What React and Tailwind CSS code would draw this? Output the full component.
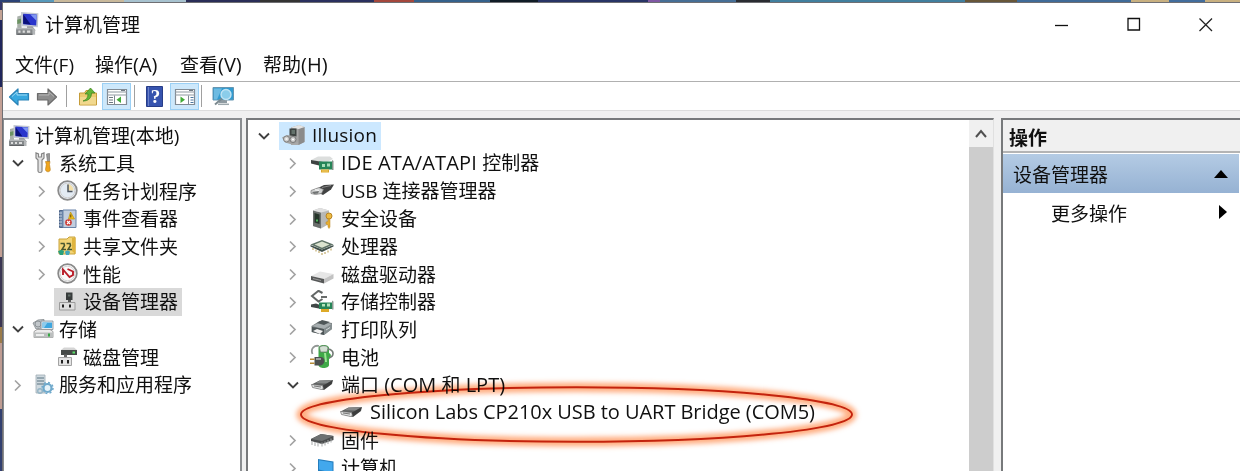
import React from "react";

const Svg = ({ children, w = 24, h = 24, className = "" }) => (
  <svg width={w} height={h} viewBox={`0 0 ${w} ${h}`} className={`block shrink-0 ${className}`} fill="none">
    {children}
  </svg>
);

const ComputerIcon = ({ size = 24 }) => (
  <svg width={size} height={size} viewBox="0 0 24 24" className="block shrink-0" fill="none">
    <path d="M3 5l4-1v12H3z" fill="#a9b0aa" />
    <path d="M3 8l4-1v4l-4 1z" fill="#6b9362" />
    <path d="M6.500 1l16 1-.5 13-15.500-1z" fill="#c3c8d2" />
    <path d="M8.500 2.500l12.500.8-.5 10-12-1z" fill="#2a35cc" />
    <path d="M8.500 3l7 9.500-7-.7z" fill="#0b1178" />
    <path d="M15 3.200l6 .3-.3 5.500z" fill="#7f97f2" />
    <path d="M12 14h5l3 4h-8z" fill="#9b9da0" />
    <path d="M2 15.500h15l2.500 1.500v5H2z" fill="#b3b6b8" />
    <path d="M2 17h15v5H2z" fill="#85898b" />
    <path d="M4 18h2v2H4zM8 18h2v2H8zM12 18h3v2h-3z" fill="#ddd" />
    <path d="M3 21.500h14" stroke="#606265" />
  </svg>
);
const ToolsIcon = () => (
  <Svg>
    <path d="M4 2v5l2 2v11c0 2 4 2 4 0V9l2-2V2L9.500 3v3h-3V3z" fill="#e2e2e2" stroke="#858585" strokeWidth="1.200" />
    <path d="M14.500 3l3-.5v8h-2z" fill="#999" stroke="#777" strokeWidth=".7" />
    <path d="M13.500 10.500h4.500l-.5 3 .8 5c0 3-4.500 3-4.800 0l.8-5z" fill="#f0a51c" stroke="#b97a12" strokeWidth=".6" />
  </Svg>
);
const ClockIcon = () => (
  <Svg>
    <circle cx="11.500" cy="11.500" r="9.300" fill="#e8edf3" stroke="#8b8b8b" strokeWidth="1.800" />
    <circle cx="11.500" cy="11.500" r="7.300" fill="#e3ebf3" stroke="#cfcfcf" />
    <path d="M11.500 11.500V5a6.500 6.500 0 0 1 6 6.500z" fill="#f3dfa8" />
    <path d="M12 5.500v7h4.500" stroke="#4c5561" strokeWidth="1.500" />
  </Svg>
);
const EventIcon = () => (
  <Svg>
    <path d="M3.500 3.500h4v17h-4z" fill="#6d86aa" stroke="#4b6388" />
    <path d="M7 3h13v17.500H7z" fill="#c2cede" stroke="#6883a8" />
    <path d="M3 6h3M3 9h3M3 12h3M3 15h3M3 18h3" stroke="#c3d0df" />
    <path d="M14.500 5l4 7h-6z" fill="#f5c21b" stroke="#b78f13" strokeWidth=".7" />
    <path d="M14.800 7.500v3" stroke="#5b4300" />
    <circle cx="12.500" cy="15.500" r="3.300" fill="#cc3832" />
    <path d="M11 14l3 3m0-3l-3 3" stroke="#fff" strokeWidth="1.100" />
  </Svg>
);
const ShareIcon = () => (
  <Svg>
    <path d="M3 5h8l2-2h6v17H3z" fill="#f2d476" stroke="#c9a33c" />
    <path d="M16 4h3.500v16L16 17z" fill="#dfb43f" />
    <path d="M4.500 9.500h3.500l.5 2-2.500 4h4M10.500 9.500h3.500l.5 2-2.500 4h4" stroke="#48562f" strokeWidth="1.500" />
    <path d="M2 17.500c2-2 5-2 6 0l-1 3.500H4z" fill="#2aa07c" />
    <path d="M9 18c1-2 4-2 5 0l-1 3h-3z" fill="#41a7bd" />
  </Svg>
);
const PerfIcon = () => (
  <Svg>
    <circle cx="11.500" cy="11.500" r="9.300" fill="#fafafa" stroke="#898989" strokeWidth="1.800" />
    <circle cx="11.500" cy="11.500" r="7.300" stroke="#d5d5d5" />
    <path d="M7 13V7.500l6.500 7.500 3.500-2V9.500L11.500 7" stroke="#b91d28" strokeWidth="1.900" />
  </Svg>
);
const DeviceIcon = () => (
  <Svg>
    <path d="M10 2.500h6.500V10H10z" fill="#383c3c" />
    <path d="M12 4.500h2.500v2H12z" fill="#62706a" />
    <path d="M12 10h3v3h-3z" fill="#555" />
    <path d="M3.500 12.500h15.500v7.500H3.500z" fill="#dedede" stroke="#9b9b9b" />
    <path d="M6 14.500h2v3H6zM13 14.500h2v3h-2z" fill="#222" />
  </Svg>
);
const StorageIcon = () => (
  <Svg>
    <path d="M1 6l5-3 6-.5v8L4 12z" fill="#c2c7cb" stroke="#82888c" strokeWidth=".8" />
    <circle cx="6" cy="7" r="3" stroke="#8c9296" />
    <path d="M9 4h12v8.500H9z" fill="#e4e9ed" stroke="#7e8b94" strokeWidth=".8" />
    <path d="M10.500 5.500H20V11h-9.500z" fill="#3ea6df" />
    <path d="M10.500 5.500h5L12 11h-1.500z" fill="#8ecbeb" />
    <path d="M2 14.500l3-2h13l3 2v6H2z" fill="#ececec" stroke="#909090" strokeWidth=".8" />
    <path d="M2 15.500h19v5H2z" fill="#bcbfbf" />
    <path d="M4 18h8" stroke="#fff" strokeWidth="1.500" />
    <path d="M16 16.500h2v3h-2z" fill="#35a843" />
  </Svg>
);
const DiskMgmtIcon = () => (
  <Svg>
    <path d="M5 5l3-2.500h10L21 5z" fill="#d5d5d5" />
    <path d="M5 5h16v5H5z" fill="#454947" />
    <path d="M16.500 6.500h2.500v2h-2.500z" fill="#59e169" />
    <path d="M8 9.500h3v3H8z" fill="#666" />
    <path d="M2.500 12.500h13v8h-13z" fill="#e4e4e4" stroke="#a3a3a3" />
    <path d="M5 15h2v3.500H5zM11 15h2v3.500h-2z" fill="#222" />
  </Svg>
);
const ServicesIcon = () => (
  <Svg>
    <path d="M4 2h9v18H4z" fill="#cfd9df" stroke="#9eacb4" strokeWidth=".8" />
    <path d="M5 5h7M5 8h7M5 11h7" stroke="#5b7482" strokeWidth="1.200" />
    <circle cx="15.500" cy="15" r="4" stroke="#6fa9cb" strokeWidth="2.200" fill="#e6f3fa" />
    <circle cx="15.500" cy="15" r="5.500" stroke="#6fa9cb" strokeWidth="1.500" strokeDasharray="2 2.300" />
    <circle cx="8" cy="18" r="2.300" stroke="#95b5c6" strokeWidth="1.400" />
  </Svg>
);

const HostIcon = () => (
  <Svg>
    <path d="M9 3.500l8-2.500L22.500 3v15l-6 3H9z" fill="#a9a9a9" />
    <path d="M16.500 5l6-2v15l-6 3z" fill="#8b8b8b" />
    <path d="M9 3.500l8-2.500L22.500 3l-6 2z" fill="#e4e4e4" />
    <path d="M7.500 4.500h7v9h-7z" fill="#3d4341" />
    <path d="M9.500 6H13v4H9.500z" fill="#64726c" />
    <path d="M0 13.500l5-2.500 10 1.500 1 5.500-6 2.500-7-2z" fill="#a3a3a3" />
    <circle cx="4.500" cy="15" r="3" fill="#cfcfcf" stroke="#808080" />
    <circle cx="11" cy="15.500" r="3" fill="#cacaca" stroke="#777" />
    <path d="M3.500 15h2M10 15.500h2" stroke="#fff" strokeWidth="1.500" />
  </Svg>
);
const IdeIcon = () => (
  <Svg>
    <path d="M1 9l7-3.500h12L23 8l-8 4z" fill="#dcdedd" />
    <path d="M1 9l12 2v4.500L1 12.500z" fill="#3e4342" />
    <path d="M9 10.500h13.500v8H9z" fill="#268558" />
    <path d="M12 13h3v3h-3zM17 12.500h3v3h-3z" fill="#a7ddb8" />
    <path d="M22 9l1.500 1v9H22z" fill="#87938b" />
    <path d="M11 18.500h8v3h-8z" fill="#dba72b" />
    <path d="M13 18.500v3m2-3v3m2-3v3" stroke="#ffe588" strokeWidth=".7" />
  </Svg>
);
const UsbIcon = () => (
  <Svg>
    <path d="M9 8.500l5-2.500 10-.5-3 5-8 5.500-4-2z" fill="#414242" />
    <path d="M12 8.500l9-2" stroke="#888" />
    <path d="M1 11.500l8-3 4.500 2-2 4-6 1-4.500-1z" fill="#cfd1d1" stroke="#777" strokeWidth=".7" />
    <path d="M2 13l7-1-1 2.500-4 .5z" fill="#707373" />
    <path d="M5 10.800l4 .5" stroke="#fff" />
  </Svg>
);
const SecurityIcon = () => (
  <Svg>
    <path d="M3 3.500l7-2.500 9 2.500V17l-8 4.500-8-2.500z" fill="#b7b8b7" />
    <path d="M3 3.500l8 2v16L3 19z" fill="#6b6f6d" />
    <path d="M3 3.500l7-2.500 9 2.500-8 2z" fill="#e0e0e0" />
    <path d="M4.500 6l5 1.500V17l-5-1.500z" fill="#26352a" />
    <path d="M7 12.500v2" stroke="#50c55f" strokeWidth="1.800" />
    <circle cx="19" cy="9" r="3" fill="#edbb42" stroke="#b88424" />
    <path d="M18 12h2v8l-1 1.500-1-1.500v-2l-2-1v-2l2-.5z" fill="#e7ae31" stroke="#b88424" strokeWidth=".5" />
  </Svg>
);
const CpuIcon = () => (
  <Svg>
    <path d="M.5 11l11.500 4.500L23.500 11v1.500L12 18 .5 12.500z" fill="#40504b" />
    <path d="M.5 10.500L12 6l11.500 4.500L12 15.500z" fill="#5f7367" />
    <path d="M4.500 10.400L12 7.500l7.500 2.900L12 13.800z" fill="#dbe3cf" />
    <path d="M3 14v2m3-.5v2m3-.5v2m3 0v2m3-3v2m3-3.500v2m3-4v2" stroke="#b59a4e" />
  </Svg>
);
const DiskIcon = () => (
  <Svg>
    <path d="M1 14l9-4.500 13.500 2.500-9.500 5z" fill="#e6e6e6" />
    <path d="M1 14l13 3v4.500L1 18z" fill="#565858" />
    <path d="M14 17l9.500-5v4.500L14 21.500z" fill="#c2c2c2" />
    <path d="M3 16.500l8 2" stroke="#999" />
  </Svg>
);
const StorageControllerIcon = () => (
  <Svg>
    <path d="M12.500 3L8.500.8 2 6l6.500 5.500 4-2.500" stroke="#626665" strokeWidth="2" />
    <path d="M11 7h6" stroke="#4e5251" strokeWidth="1.700" />
    <path d="M1 14.500l5-1 8 3v3L1 17z" fill="#404746" />
    <path d="M9 12.500h14V19H9z" fill="#268558" />
    <path d="M12 14h3v2.500h-3zM17 13.500h3v3h-3z" fill="#b3e4ba" />
    <path d="M22 10.500l1.500 1v8H22z" fill="#909b94" />
    <path d="M11 19h8v3h-8z" fill="#ddaa28" />
  </Svg>
);
const PrinterIcon = () => (
  <Svg>
    <path d="M1.500 9l8-5 12.500 2v6l-8 6-12.500-3z" fill="#7c8384" />
    <path d="M2 9l9-4 11 2-8 5z" fill="#a7aeb0" />
    <path d="M7 6l5-3 8 2-6 3z" fill="#4f5759" />
    <path d="M2 10l12 2v6L2 15z" fill="#4e5658" />
    <path d="M3 14l4-2 6 2-3 3z" fill="#f2f2f2" />
    <path d="M14 12l8-5v5l-8 6z" fill="#858e90" />
    <path d="M16 13l4-2.500" stroke="#d3d9da" />
  </Svg>
);
const BatteryIcon = () => (
  <Svg w={24} h={26} className="-my-px">
    <path d="M2.500 10C0 4 5 1 9 2" stroke="#919694" strokeWidth="1.800" />
    <path d="M8.500 4c0-4 10.500-4 10.500 0v5c2.500 1 2.500 4 0 6v6c0 4-10.500 4-10.500 0z" fill="#3fa948" />
    <path d="M9.500 4c0-3 8.500-3 8.500 0l-1 4h-6.500z" fill="#d2dfd3" stroke="#67756a" strokeWidth=".7" />
    <path d="M15 9l1 9" stroke="#9be894" strokeWidth="2" />
    <path d="M18 5c6.500 1 6.500 7 1 9" stroke="#737b76" strokeWidth="1.600" />
    <path d="M4.500 13h7c4.500 1 3.500 8-1 8.500h-6z" fill="#4c5050" />
    <path d="M6 15h5" stroke="#b8bdb9" strokeWidth="1.500" />
    <path d="M0 14.500h4.500V16H0zM0 18.500h4.500V20H0z" fill="#b58a36" />
  </Svg>
);
const PortIcon = () => (
  <Svg>
    <path d="M1.500 11.500l8-4 13.500-.5-1 4-8 6-11-2.500z" fill="#5c5e5e" />
    <path d="M9.500 7.800l13-.8-6 3.500-11-.3z" fill="#858888" />
    <path d="M1.500 11.500l11 1 1 3-2 1-9-2z" fill="#dfe1e1" stroke="#777" strokeWidth=".7" />
    <path d="M13 12.500l9.500-5-1 3.500-7.500 5.500z" fill="#3c3d3d" />
    <path d="M4 13l7 1" stroke="#777" strokeWidth="1.200" />
  </Svg>
);
const FirmwareIcon = () => (
  <Svg>
    <path d="M1 11l10-5 12.500 2v4L12 16 1 13z" fill="#4a4c4d" />
    <path d="M1 11l10-5 12.500 2L12 13z" fill="#6d7071" />
    <path d="M2 13v4m3-3v4m3-3.500v4m4-4v4m3-5v4m3-5.500v4m3-5.500v4" stroke="#a5a8a9" />
  </Svg>
);
const MonitorIcon = () => (
  <Svg>
    <path d="M8 3l15.500 2.500V19L8 15z" fill="#247dbd" />
    <path d="M9 4.200l13.500 2.300v10.500L9 13.500z" fill="#42a8ed" />
    <path d="M14 17v4m-4 0h9" stroke="#777" strokeWidth="2" />
  </Svg>
);

const ArrowIcon = ({ flip, fill, dark, light }) => (
  <Svg w={22} h={20} className={flip ? "-scale-x-100" : ""}>
    <path d="M1.500 11l8.500-8v4.500h10.500v6.500H10V19z" fill={fill} stroke={dark} strokeWidth="1.200" strokeLinejoin="round" />
    <path d="M4 10.500l5-4.500v3h10" stroke={light} strokeWidth="1" />
  </Svg>
);
const UpFolderIcon = () => (
  <Svg w={20} h={20}>
    <path d="M1.500 7h5l1.500-2.500h5L14 7h4.500v12h-17z" fill="#eccb70" stroke="#c59c39" />
    <path d="M2 11h16v7.500H2z" fill="#f1d88e" />
    <path d="M5 15c3-1 5-3 5-7H7l5.500-6L17 7h-3.500c0 5-3 8-8.500 8z" fill="#62b336" stroke="#39831b" strokeWidth=".7" />
  </Svg>
);
const PaneIcon = ({ right }) => (
  <Svg w={22} h={20}>
    <path d="M1.500 3.500h19v15h-19z" fill="#fff" stroke="#828b94" strokeWidth="1.200" />
    <path d="M1 6h20M1 9h20" stroke="#8f99a2" strokeWidth="1.200" />
    <path d="M15 4.500h4" stroke="#727b84" />
    {right ? (
      <>
        <path d="M14.500 9.500v9" stroke="#7f8992" />
        <path d="M16.500 11.500h3M16.500 14h3M16.500 16.500h3" stroke="#4b77a0" />
        <path d="M6.500 10.500v6.500l4.500-3.250z" fill="#42ac37" />
      </>
    ) : (
      <>
        <path d="M8.500 9.500v9" stroke="#7f8992" />
        <path d="M3 11.500h4M3 14h4M3 16.500h4" stroke="#6b7680" />
        <path d="M15 10.500v6.500l-4.500-3.250z" fill="#42ac37" />
      </>
    )}
  </Svg>
);
const HelpIcon = () => (
  <Svg w={18} h={21}>
    <path d="M.5.500h16v20H.5z" fill="#3653ae" stroke="#273d88" />
    <path d="M2.500 1v19" stroke="#6b81c8" />
    <text x="9.500" y="17" textAnchor="middle" fontSize="19" fontWeight="700" fill="#fff" className="font-['Liberation_Serif',serif]">?</text>
  </Svg>
);
const ConsoleIcon = () => (
  <Svg w={23} h={20}>
    <path d="M1 1.500h20.500v12.500H1z" fill="#329bd0" stroke="#6796b1" />
    <path d="M2 2.500h8l-5 11H2z" fill="#6dbbe2" />
    <path d="M7 14h8v3H7z" fill="#8e9aa1" />
    <circle cx="14" cy="8.500" r="5" fill="#8bcdea" stroke="#c1e4f4" strokeWidth="1.400" />
    <path d="M10 12.500l-7 6" stroke="#7b898f" strokeWidth="2" />
    <path d="M6 18.300h11" stroke="#9da8ad" strokeWidth="1.500" />
  </Svg>
);

const Chevron = ({ open, className = "" }) => (
  <svg width="14" height="14" viewBox="0 0 14 14" fill="none" className={`block shrink-0 ${className}`}>
    {open ? (
      <path d="M2 4.500L7 9.500l5-5" stroke="#404040" strokeWidth="1.900" />
    ) : (
      <path d="M4 2.500L9 7.500l-5 5" stroke="#a3a3a3" strokeWidth="1.700" />
    )}
  </svg>
);

const L = ({ children, className = "" }) => (
  <span className={`font-['Open_Sans',sans-serif] ${className}`}>{children}</span>
);

const NAV = [
  { pad: "pl-[3px]", icon: <ComputerIcon />, label: <>计算机管理<L>(</L>本地<L>)</L></>, root: true },
  { pad: "pl-[7px]", open: true, icon: <ToolsIcon />, label: "系统工具" },
  { pad: "pl-[31px]", icon: <ClockIcon />, label: "任务计划程序" },
  { pad: "pl-[31px]", icon: <EventIcon />, label: "事件查看器" },
  { pad: "pl-[31px]", icon: <ShareIcon />, label: "共享文件夹" },
  { pad: "pl-[31px]", icon: <PerfIcon />, label: "性能" },
  { pad: "pl-[31px]", icon: <DeviceIcon />, label: "设备管理器", leaf: true, selected: true },
  { pad: "pl-[7px]", open: true, icon: <StorageIcon />, label: "存储" },
  { pad: "pl-[31px]", icon: <DiskMgmtIcon />, label: "磁盘管理", leaf: true },
  { pad: "pl-[7px]", icon: <ServicesIcon />, label: "服务和应用程序" },
];

const DEVICES = [
  { icon: <IdeIcon />, label: <><L className="text-[20px] tracking-[0.15px]">IDE ATA/ATAPI </L>控制器</> },
  { icon: <UsbIcon />, label: <><L>USB </L>连接器管理器</> },
  { icon: <SecurityIcon />, label: "安全设备" },
  { icon: <CpuIcon />, label: "处理器" },
  { icon: <DiskIcon />, label: "磁盘驱动器" },
  { icon: <StorageControllerIcon />, label: "存储控制器" },
  { icon: <PrinterIcon />, label: "打印队列" },
  { icon: <BatteryIcon />, label: "电池" },
  { icon: <PortIcon />, label: <>端口<L className="text-[20px]"> (COM </L>和<L className="text-[20px]"> LPT)</L></>, open: true },
  { icon: <PortIcon />, label: <L className="text-[20px] tracking-[-0.05px]">Silicon Labs CP210x USB to UART Bridge (COM5)</L>, child: true },
  { icon: <FirmwareIcon />, label: "固件" },
  { icon: <MonitorIcon />, label: "计算机" },
];

function NavRow({ item }) {
  return (
    <div className={`flex h-[27.670px] shrink-0 items-center whitespace-nowrap ${item.pad}`}>
      {!item.root && (item.leaf ? <span className="w-[14px] shrink-0" /> : <Chevron open={item.open} />)}
      <div
        className={`flex h-full items-center pr-1 ${item.root ? "gap-1" : item.leaf ? "ml-[5px] gap-[3px] pl-[2px]" : "ml-[7px] gap-[3px]"} ${item.selected ? "bg-[#d9d9d9]" : ""}`}
      >
        {item.icon}
        <span className={item.root ? "" : "mb-[2px]"}>{item.label}</span>
      </div>
    </div>
  );
}

function DeviceRow({ item }) {
  return (
    <div className={`flex h-[27.670px] shrink-0 items-center whitespace-nowrap ${item.child ? "pl-[91px]" : "pl-[38px]"}`}>
      {!item.child && <Chevron open={item.open} className="mr-[10px]" />}
      {item.icon}
      <span className="mb-[2px] ml-[7px]">{item.label}</span>
    </div>
  );
}

export default function App() {
  return (
    <div className="flex h-[471px] w-[1240px] flex-col overflow-hidden bg-white font-['Noto_Sans_CJK_SC',sans-serif] text-[19px] leading-[27px] text-[#101010]">
      <div className="flex h-[2px] shrink-0">
        <div className="w-[20px] bg-[#2b4276]" />
        <div className="w-[34px] bg-[#5799bb]" />
        <div className="w-[70px] bg-[#c9b99b]" />
        <div className="w-[62px] bg-[#a7c2cf]" />
        <div className="w-[74px] bg-[#292d57]" />
        <div className="w-[40px] bg-[#333]" />
        <div className="w-[74px] bg-[#2a305e]" />
        <div className="w-[40px] bg-[#a4473c]" />
        <div className="w-[76px] bg-[#35618b]" />
        <div className="w-[48px] bg-[#101c26]" />
        <div className="w-[110px] bg-[#283465]" />
        <div className="w-[12px] bg-[#7f58a3]" />
        <div className="w-[76px] bg-[#466e95]" />
        <div className="w-[34px] bg-[#2a2c31]" />
        <div className="w-[195px] bg-[#417f9e]" />
        <div className="w-[52px] bg-[#675638]" />
        <div className="w-[114px] bg-[#3f6b98]" />
        <div className="w-[38px] bg-[#c8b080]" />
        <div className="w-[36px] bg-[#426d9c]" />
        <div className="grow bg-[#c8b080]" />
      </div>

      <div className="flex min-h-0 grow">
        <div className="flex w-[2px] shrink-0 flex-col">
          <div className="h-[8px] bg-[#35376c]" />
          <div className="h-[10px] bg-[#c3a395]" />
          <div className="h-[67px] bg-[#20265c]" />
          <div className="h-[170px] bg-[#c3a095]" />
          <div className="h-[70px] bg-[#3b3653]" />
          <div className="h-[16px] bg-[#9b7b49]" />
          <div className="h-[66px] bg-[#bf9c92]" />
          <div className="grow bg-[#32406f]" />
        </div>

        <div className="flex min-w-0 grow flex-col border-l border-t border-[#6f6f73] bg-white">
          <header className="flex h-[44px] shrink-0 items-center justify-between pb-[3px] pl-[11px] pr-[26px]">
            <div className="flex items-center gap-[5px]">
              <ComputerIcon size={26} />
              <span className="mb-[1px]">计算机管理</span>
            </div>
            <div className="flex items-center gap-[56px]">
              <Svg w={16} h={16}><path d="M1 9.500h13" stroke="#111" strokeWidth="1.300" /></Svg>
              <Svg w={16} h={16}><path d="M2 2.500h11.500V14H2z" stroke="#111" strokeWidth="1.300" /></Svg>
              <Svg w={16} h={16}><path d="M1.500 2.500l12.500 12.500M14 2.500L1.500 15" stroke="#222" strokeWidth="1.300" /></Svg>
            </div>
          </header>

          <nav className="flex h-[34px] shrink-0 items-center pl-[12px]">
            <span className="w-[80px]">文件<L>(F)</L></span>
            <span className="w-[85px]">操作<L className="text-[20px]">(A)</L></span>
            <span className="w-[83px]">查看<L className="text-[20px]">(V)</L></span>
            <span>帮助<L className="text-[20px]">(H)</L></span>
          </nav>

          <div className="flex h-[30px] shrink-0 items-center border-b border-t border-b-[#dcdcdc] border-t-[#b0b0b0] pl-[5px]">
            <ArrowIcon fill="#38a8df" dark="#2a83b7" light="#9ed9f3" />
            <div className="w-[6px]" />
            <ArrowIcon flip fill="#8d8d8d" dark="#6b6b6b" light="#b5b5b5" />
            <div className="ml-[8px] h-[22px] w-px bg-[#a0a0a0]" />
            <div className="ml-[11px]"><UpFolderIcon /></div>
            <div className="ml-[4px] flex h-[27px] w-[29px] items-center justify-center border border-[#9bd0f5] bg-[#cde8fb]">
              <PaneIcon />
            </div>
            <div className="ml-[3px] h-[22px] w-px bg-[#a0a0a0]" />
            <div className="ml-[11px]"><HelpIcon /></div>
            <div className="ml-[6px] flex h-[27px] w-[29px] items-center justify-center border border-[#9bd0f5] bg-[#cde8fb]">
              <PaneIcon right />
            </div>
            <div className="ml-[2px] h-[22px] w-px bg-[#a0a0a0]" />
            <div className="ml-[10px]"><ConsoleIcon /></div>
          </div>

          <main className="flex min-h-0 grow bg-[#f0f0f0] pt-[7px]">
            <section className="flex w-[239px] shrink-0 flex-col overflow-hidden border-l border-r-2 border-t-2 border-[#8a8d90] bg-white pt-[2px]">
              {NAV.map((item, i) => (
                <NavRow key={i} item={item} />
              ))}
            </section>

            <section className="ml-[4px] flex w-[748px] shrink-0 overflow-hidden border-l-2 border-r border-t-2 border-l-[#77797b] border-r-[#e0e0e0] border-t-[#77797b] bg-white">
              <div className="relative flex min-w-0 grow flex-col bg-white pt-[2px]">
                <div className="flex h-[27.670px] shrink-0 items-center pl-[9px]">
                  <Chevron open />
                  <div className="ml-[8px] flex h-full items-center bg-[#cce8ff] pl-[3px] pr-[4px]">
                    <HostIcon />
                    <span className="mb-[2px] ml-[6px]"><L className="tracking-[0.2px]">Illusion</L></span>
                  </div>
                </div>
                {DEVICES.map((item, i) => (
                  <DeviceRow key={i} item={item} />
                ))}
                <svg width="580" height="90" viewBox="0 0 580 90" fill="none" className="absolute left-[39px] top-[249px] mix-blend-multiply">
                  <defs>
                    <filter id="glow" x="-10%" y="-30%" width="120%" height="160%">
                      <feGaussianBlur stdDeviation="2.800" />
                    </filter>
                  </defs>
                  <ellipse cx="289.500" cy="45.500" rx="275.500" ry="27.300" stroke="#ff9a63" strokeOpacity=".8" strokeWidth="9.500" filter="url(#glow)" />
                  <ellipse cx="289.500" cy="45.500" rx="275.500" ry="27.300" stroke="#c4230d" strokeWidth="1.900" />
                </svg>
              </div>
              <div className="flex w-[24px] shrink-0 flex-col bg-[#cdcdcd]">
                <div className="flex h-[27px] items-center justify-center bg-[#f0f0f0]">
                  <Svg w={14} h={14}><path d="M2 10l5-6 5 6" stroke="#505050" strokeWidth="2" /></Svg>
                </div>
              </div>
            </section>

            <section className="ml-[7px] flex min-w-0 grow flex-col border-l-2 border-t-2 border-[#77797b] bg-white">
              <div className="flex h-[33px] shrink-0 items-center border-b-2 border-[#b4b4b4] bg-[#f0f0f0] pl-[6px] pt-[2px] font-bold">操作</div>
              <div className="mr-px mt-px flex h-[39px] shrink-0 items-center justify-between bg-linear-to-b from-[#b4cbe4] to-[#96b2d3] pl-[10px] pr-[10px]">
                <span>设备管理器</span>
                <Svg w={16} h={10}><path d="M1 9h14L8 1z" fill="#000" /></Svg>
              </div>
              <div className="flex h-[38px] shrink-0 items-center justify-between pl-[48px] pr-[12px]">
                <span>更多操作</span>
                <Svg w={10} h={16}><path d="M1 1v14l8-7z" fill="#000" /></Svg>
              </div>
            </section>
          </main>
        </div>
      </div>
    </div>
  );
}
